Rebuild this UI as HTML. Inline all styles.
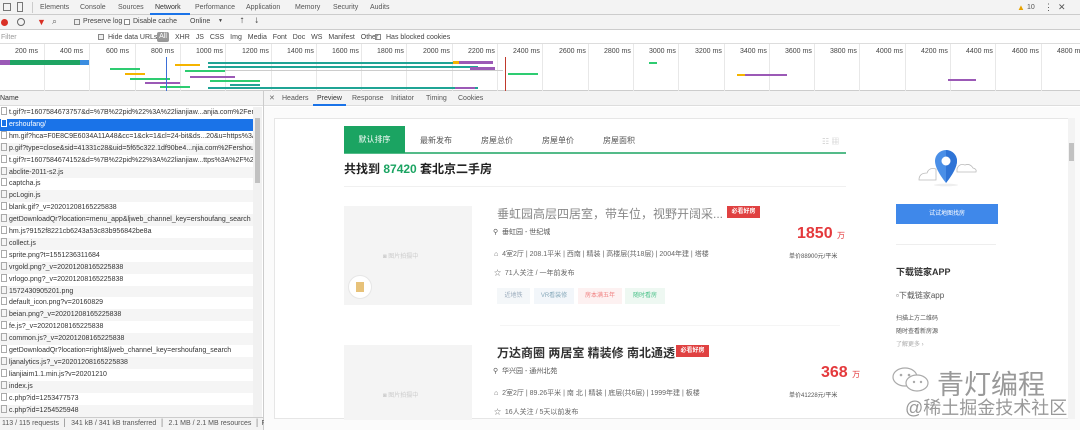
<!DOCTYPE html>
<html><head><meta charset="utf-8"><style>
*{margin:0;padding:0;box-sizing:border-box}
body{width:1080px;height:430px;overflow:hidden;background:#fff;font-family:"Liberation Sans","Noto Sans CJK SC",sans-serif;font-size:7px;color:#333;position:relative}
.a{position:absolute;white-space:nowrap}
</style></head><body>
<!-- top tabs -->
<div class="a" style="left:0;top:0;width:1080px;height:15px;background:#f3f3f3;border-bottom:1px solid #ccc"></div>
<div class="a" style="left:3px;top:3px;width:8px;height:8px;border:1px solid #777"></div>
<div class="a" style="left:17px;top:2px;width:6px;height:10px;border:1px solid #777"></div>
<div class="a" style="left:32px;top:2px;width:1px;height:11px;background:#ccc"></div>
<div class="a" style="top:4px;left:40px;color:#555">Elements</div>
<div class="a" style="top:4px;left:80px;color:#555">Console</div>
<div class="a" style="top:4px;left:118px;color:#555">Sources</div>
<div class="a" style="top:4px;left:155px;color:#333">Network</div>
<div class="a" style="left:150px;top:13px;width:40px;height:2px;background:#1a73e8"></div>
<div class="a" style="top:4px;left:195px;color:#555">Performance</div>
<div class="a" style="top:4px;left:246px;color:#555">Application</div>
<div class="a" style="top:4px;left:295px;color:#555">Memory</div>
<div class="a" style="top:4px;left:333px;color:#555">Security</div>
<div class="a" style="top:4px;left:370px;color:#555">Audits</div>
<div class="a" style="top:3px;left:1017px;color:#e8a300;font-size:8px">▲</div>
<div class="a" style="top:4px;left:1027px;color:#555">10</div>
<div class="a" style="top:2px;left:1044px;color:#555;font-size:9px">⋮</div>
<div class="a" style="top:2px;left:1058px;color:#555;font-size:9px">✕</div>
<!-- toolbar -->
<div class="a" style="left:0;top:15px;width:1080px;height:15px;background:#f3f3f3;border-bottom:1px solid #ccc"></div>
<div class="a" style="left:1px;top:19px;width:7px;height:7px;border-radius:50%;background:#d93025"></div>
<div class="a" style="left:17px;top:18px;width:8px;height:8px;border-radius:50%;border:1.3px solid #666"></div>
<div class="a" style="left:37px;top:17px;color:#d93025;font-size:9px">▼</div>
<div class="a" style="left:52px;top:16px;color:#666;font-size:9px">⌕</div>
<div class="a" style="left:74px;top:19px;width:6px;height:6px;border:1px solid #888;background:#eee"></div>
<div class="a" style="left:83px;top:18px;color:#444">Preserve log</div>
<div class="a" style="left:124px;top:19px;width:6px;height:6px;border:1px solid #888;background:#fff"></div>
<div class="a" style="left:133px;top:18px;color:#444">Disable cache</div>
<div class="a" style="left:190px;top:18px;color:#444">Online</div>
<div class="a" style="left:218px;top:18px;color:#444;font-size:5px">▼</div>
<div class="a" style="left:240px;top:16px;color:#555;font-size:8px">⭡</div>
<div class="a" style="left:255px;top:16px;color:#555;font-size:8px">⭣</div>
<!-- filter -->
<div class="a" style="left:0;top:30px;width:1080px;height:14px;background:#fff;border-bottom:1px solid #ddd"></div>
<div class="a" style="left:1px;top:34px;color:#999">Filter</div>
<div class="a" style="left:98px;top:34px;width:6px;height:6px;border:1px solid #888;background:#eee"></div>
<div class="a" style="left:108px;top:34px;color:#444">Hide data URLs</div>
<div class="a" style="left:157px;top:32px;width:12px;height:10px;background:#999;border-radius:2px;color:#fff;text-align:center;line-height:10px">All</div>
<div class="a" style="left:175px;top:34px;color:#444;word-spacing:4px">XHR JS CSS Img Media Font Doc WS Manifest Other</div>
<div class="a" style="left:375px;top:34px;width:6px;height:6px;border:1px solid #888"></div>
<div class="a" style="left:386px;top:34px;color:#444">Has blocked cookies</div>
<!-- timeline -->
<div class="a" style="left:0;top:44px;width:1080px;height:47px;background:#fff;border-bottom:1px solid #ccc"></div>
<div id="grid"></div>
<div class="a" style="left:0;top:60px;width:88px;height:5px;background:#1fa463"></div>
<div class="a" style="left:0;top:60px;width:10px;height:5px;background:#9b59b6"></div>
<div class="a" style="left:80px;top:60px;width:9px;height:5px;background:#3b8de0"></div>
<div class="a" style="left:208px;top:62px;width:280px;height:2px;background:#1fa495"></div>
<div class="a" style="left:453px;top:61px;width:40px;height:3px;background:#9b59b6"></div>
<div class="a" style="left:453px;top:61px;width:6px;height:3px;background:#f5b400"></div>
<div class="a" style="left:208px;top:66px;width:270px;height:2px;background:#1fa495"></div>
<div class="a" style="left:470px;top:67px;width:25px;height:3px;background:#9b59b6"></div>
<div class="a" style="left:208px;top:70px;width:295px;height:1px;background:#ccc"></div>
<div class="a" style="left:508px;top:73px;width:30px;height:2px;background:#2ecc71"></div>
<div class="a" style="left:208px;top:87px;width:270px;height:2px;background:#1fa495"></div>
<div class="a" style="left:455px;top:87px;width:20px;height:2px;background:#9b59b6"></div>
<div class="a" style="left:110px;top:68px;width:30px;height:2px;background:#2ecc71"></div>
<div class="a" style="left:125px;top:73px;width:20px;height:2px;background:#f5b400"></div>
<div class="a" style="left:130px;top:78px;width:40px;height:2px;background:#2ecc71"></div>
<div class="a" style="left:145px;top:82px;width:35px;height:2px;background:#9b59b6"></div>
<div class="a" style="left:160px;top:86px;width:30px;height:2px;background:#2ecc71"></div>
<div class="a" style="left:175px;top:64px;width:25px;height:2px;background:#f5b400"></div>
<div class="a" style="left:185px;top:70px;width:40px;height:2px;background:#2ecc71"></div>
<div class="a" style="left:190px;top:76px;width:45px;height:2px;background:#9b59b6"></div>
<div class="a" style="left:210px;top:80px;width:50px;height:2px;background:#2ecc71"></div>
<div class="a" style="left:230px;top:84px;width:30px;height:2px;background:#1fa495"></div>
<div class="a" style="left:166px;top:57px;width:1px;height:34px;background:#3b6fd8"></div>
<div class="a" style="left:505px;top:57px;width:1px;height:34px;background:#c0392b"></div>
<div class="a" style="left:649px;top:62px;width:8px;height:2px;background:#2ecc71"></div>
<div class="a" style="left:737px;top:74px;width:50px;height:2px;background:#9b59b6"></div>
<div class="a" style="left:737px;top:74px;width:8px;height:2px;background:#f5b400"></div>
<div class="a" style="left:948px;top:79px;width:28px;height:2px;background:#9b59b6"></div>
<!-- left list -->
<div class="a" style="left:0;top:91px;width:263px;height:15px;background:#f3f3f3;border-bottom:1px solid #ddd"></div>
<div class="a" style="left:0;top:95px;color:#333">Name</div>
<div id="rows"></div>
<div class="a" style="left:253px;top:107px;width:9px;height:310px;background:#f1f1f1"></div>
<div class="a" style="left:255px;top:118px;width:5px;height:65px;background:#c1c1c1"></div>
<div class="a" style="left:263px;top:91px;width:1px;height:339px;background:#ccc"></div>
<div class="a" style="left:0;top:417px;width:263px;height:13px;background:#f3f3f3;border-top:1px solid #ccc"></div>
<div class="a" style="left:2px;top:420px;color:#555">113 / 115 requests &nbsp;│&nbsp; 341 kB / 341 kB transferred &nbsp;│&nbsp; 2.1 MB / 2.1 MB resources &nbsp;│ Fin</div>
<!-- right panel tabs -->
<div class="a" style="left:264px;top:91px;width:816px;height:15px;background:#f3f3f3;border-bottom:1px solid #ddd"></div>
<div class="a" style="left:269px;top:94px;color:#666">✕</div>
<div class="a" style="left:282px;top:95px;color:#555">Headers</div>
<div class="a" style="left:317px;top:95px;color:#333">Preview</div>
<div class="a" style="left:313px;top:104px;width:33px;height:2px;background:#1a73e8"></div>
<div class="a" style="left:352px;top:95px;color:#555">Response</div>
<div class="a" style="left:391px;top:95px;color:#555">Initiator</div>
<div class="a" style="left:426px;top:95px;color:#555">Timing</div>
<div class="a" style="left:458px;top:95px;color:#555">Cookies</div>
<div class="a" style="left:264px;top:107px;width:816px;height:323px;background:#fbfbfb"></div>
<div class="a" style="left:274px;top:118px;width:801px;height:301px;background:#fff;border:1px solid #e6e6e6"></div>
<div class="a" style="left:1068px;top:118px;width:7px;height:301px;background:#f3f3f3"></div>
<div class="a" style="left:1069px;top:143px;width:5px;height:18px;background:#c1c1c1"></div>
<!-- preview content -->
<div class="a" style="left:344px;top:126px;width:61px;height:27px;background:#1ba462;color:#fff;font-size:8px;line-height:27px;text-align:center">默认排序</div>
<div class="a" style="left:344px;top:152px;width:502px;height:2px;background:#1ba462;opacity:.75"></div>
<div class="a" style="left:420px;top:135px;font-size:8px;color:#555">最新发布</div>
<div class="a" style="left:481px;top:135px;font-size:8px;color:#555">房屋总价</div>
<div class="a" style="left:542px;top:135px;font-size:8px;color:#555">房屋单价</div>
<div class="a" style="left:603px;top:135px;font-size:8px;color:#555">房屋面积</div>
<div class="a" style="left:822px;top:136px;color:#ccc;font-size:8px">☷ ▦</div>
<div class="a" style="left:344px;top:160px;font-size:12px;font-weight:bold;color:#222">共找到 <span style="color:#1ba462">87420</span> 套北京二手房</div>
<div class="a" style="left:344px;top:186px;width:502px;height:1px;background:#f0f0f0"></div>
<!-- listing 1 -->
<div class="a" style="left:344px;top:206px;width:128px;height:99px;background:#f4f4f4"></div>
<div class="a" style="left:383px;top:251px;color:#ccc;font-size:6px">◙ 图片拍摄中</div>
<div class="a" style="left:348px;top:275px;width:24px;height:24px;border-radius:50%;background:#fff;border:1px solid #e6e6e6"></div>
<div class="a" style="left:356px;top:282px;width:8px;height:10px;background:#e7c27a"></div>
<div class="a" style="left:497px;top:205px;font-size:12px;color:#888">垂虹园高层四居室，带车位，视野开阔采...</div>
<div class="a" style="left:727px;top:206px;width:33px;height:12px;background:#e04141;color:#fff;font-size:6px;line-height:12px;text-align:center;font-weight:bold">必看好房</div>
<div class="a" style="left:493px;top:227px;font-size:7px;color:#555">⚲ &nbsp;垂虹园 - 世纪城</div>
<div class="a" style="left:494px;top:249px;font-size:7px;color:#666">⌂ &nbsp;4室2厅 | 208.1平米 | 西南 | 精装 | 高楼层(共18层) | 2004年建 | 塔楼</div>
<div class="a" style="left:494px;top:268px;font-size:7px;color:#666">☆ &nbsp;71人关注 / 一年前发布</div>
<div class="a" style="left:497px;top:288px;width:33px;height:16px;background:#f4f7f9;color:#9ab;font-size:6px;line-height:16px;text-align:center">近地铁</div>
<div class="a" style="left:534px;top:288px;width:40px;height:16px;background:#f2f6fa;color:#8ab;font-size:6px;line-height:16px;text-align:center">VR看装修</div>
<div class="a" style="left:578px;top:288px;width:44px;height:16px;background:#fdf1f1;color:#f08080;font-size:6px;line-height:16px;text-align:center">房本满五年</div>
<div class="a" style="left:625px;top:288px;width:40px;height:16px;background:#eef8f2;color:#4cc28a;font-size:6px;line-height:16px;text-align:center">随时看房</div>
<div class="a" style="left:797px;top:225px;font-size:16px;font-weight:bold;color:#e4393c">1850 <span style="font-size:8px;font-weight:normal">万</span></div>
<div class="a" style="left:789px;top:251px;font-size:6px;color:#555">单价88900元/平米</div>
<div class="a" style="left:500px;top:325px;width:340px;height:1px;background:#f5f5f5"></div>
<!-- listing 2 -->
<div class="a" style="left:344px;top:345px;width:128px;height:75px;background:#f4f4f4"></div>
<div class="a" style="left:383px;top:390px;color:#ccc;font-size:6px">◙ 图片拍摄中</div>
<div class="a" style="left:497px;top:344px;font-size:12px;font-weight:bold;color:#333">万达商圈 两居室 精装修 南北通透</div>
<div class="a" style="left:676px;top:345px;width:33px;height:12px;background:#e04141;color:#fff;font-size:6px;line-height:12px;text-align:center;font-weight:bold">必看好房</div>
<div class="a" style="left:493px;top:366px;font-size:7px;color:#555">⚲ &nbsp;华兴园 - 通州北苑</div>
<div class="a" style="left:494px;top:388px;font-size:7px;color:#666">⌂ &nbsp;2室2厅 | 89.26平米 | 南 北 | 精装 | 底层(共6层) | 1999年建 | 板楼</div>
<div class="a" style="left:494px;top:407px;font-size:7px;color:#666">☆ &nbsp;16人关注 / 5天以前发布</div>
<div class="a" style="left:821px;top:364px;font-size:16px;font-weight:bold;color:#e4393c">368 <span style="font-size:8px;font-weight:normal">万</span></div>
<div class="a" style="left:789px;top:390px;font-size:6px;color:#555">单价41228元/平米</div>
<!-- sidebar -->
<svg class="a" style="left:915px;top:145px" width="65" height="45" viewBox="0 0 65 45">
<path d="M4 35 q0-7 8-7 q2-6 9-4 v11z" fill="#fff" stroke="#bbb" stroke-width=".8"/>
<path d="M42 24 q2-6 8-4 q5-2 8 3 q4 1 3 4 h-19z" fill="#fff" stroke="#bbb" stroke-width=".8"/>
<path d="M31 5 a11 11 0 0 1 11 11 q0 8 -11 22 q-11-14 -11-22 a11 11 0 0 1 11-11z" fill="#4a8fe7"/>
<path d="M31 5 a11 11 0 0 1 11 11 q0 8 -11 22z" fill="#2f74d6"/>
<circle cx="31" cy="16" r="4.5" fill="#fff"/>
<ellipse cx="31" cy="40" rx="12" ry="1.3" fill="#eee"/>
</svg>
<div class="a" style="left:896px;top:204px;width:102px;height:20px;background:#3f88ea;color:#fff;font-size:6px;line-height:20px;text-align:center">试试地图找房</div>
<div class="a" style="left:896px;top:244px;width:100px;height:1px;background:#eee"></div>
<div class="a" style="left:896px;top:265px;font-size:9px;font-weight:bold;color:#333">下载链家APP</div>
<div class="a" style="left:896px;top:290px;font-size:8px;color:#555">▫下载链家app</div>
<div class="a" style="left:896px;top:313px;font-size:6px;color:#555">扫描上方二维码</div>
<div class="a" style="left:896px;top:326px;font-size:6px;color:#555">随时查看新房源</div>
<div class="a" style="left:896px;top:339px;font-size:6px;color:#aaa">了解更多 ›</div>
<!-- watermark -->
<svg class="a" style="left:891px;top:365px" width="40" height="30" viewBox="0 0 40 30"><ellipse cx="14" cy="12" rx="12" ry="9" fill="none" stroke="#aaa" stroke-width="1.2"/><ellipse cx="26" cy="18" rx="11" ry="8" fill="#fff" stroke="#aaa" stroke-width="1.2"/><circle cx="10" cy="10" r="1.3" fill="#aaa"/><circle cx="18" cy="10" r="1.3" fill="#aaa"/><circle cx="23" cy="17" r="1.2" fill="#aaa"/><circle cx="30" cy="17" r="1.2" fill="#aaa"/></svg>
<div class="a" style="left:937px;top:363px;font-size:27px;color:#999">青灯编程</div>
<div class="a" style="left:905px;top:394px;font-size:18px;color:#999">@稀土掘金技术社区</div>
<script>
var g='';
for(var k=1;k<=24;k++){var x=Math.round(40+45.3*(k-1));g+='<div class="a" style="left:'+(x-25)+'px;top:48px;color:#444;font-size:7px">'+(k*200)+' ms</div>';g+='<div class="a" style="left:'+(x+4)+'px;top:44px;width:1px;height:47px;background:#e8e8e8"></div>';}
document.getElementById('grid').innerHTML=g;
var names=['t.gif?r=1607584673757&d=%7B%22pid%22%3A%22lianjiaw...anjia.com%2Fersho','ershoufang/','hm.gif?hca=F0E8C9E6034A11A48&cc=1&ck=1&cl=24-bit&ds...20&u=https%3A%','p.gif?type=close&sid=41331c28&uid=5f65c322.1df90be4...njia.com%2Fershoufan','t.gif?r=1607584674152&d=%7B%22pid%22%3A%22lianjiaw...ttps%3A%2F%2Fbj','abclite-2011-s2.js','captcha.js','pcLogin.js','blank.gif?_v=20201208165225838','getDownloadQr?location=menu_app&ljweb_channel_key=ershoufang_search','hm.js?9152f8221cb6243a53c83b956842be8a','collect.js','sprite.png?t=1551236311684','vrgold.png?_v=20201208165225838','vrlogo.png?_v=20201208165225838','1572430905201.png','default_icon.png?v=20160829','beian.png?_v=20201208165225838','fe.js?_v=20201208165225838','common.js?_v=20201208165225838','getDownloadQr?location=right&ljweb_channel_key=ershoufang_search','ljanalytics.js?_v=20201208165225838','lianjiaim1.1.min.js?v=20201210','index.js','c.php?id=1253477573','c.php?id=1254525948'];
var r='';
for(var i=0;i<names.length;i++){var y=107+i*11.9;var sel=i==1;
r+='<div class="a" style="left:0;top:'+y+'px;width:253px;height:12px;background:'+(sel?'#1a73e8':(i%2?'#f5f5f5':'#fff'))+';color:'+(sel?'#fff':'#333')+';font-size:7px;line-height:12px;overflow:hidden"><span style="display:inline-block;width:6px;height:8px;border:1px solid '+(sel?'#fff':'#aaa')+';margin:0 2px 0 1px;vertical-align:-1px"></span>'+names[i]+'</div>';}
document.getElementById('rows').innerHTML=r;
</script>
</body></html>
